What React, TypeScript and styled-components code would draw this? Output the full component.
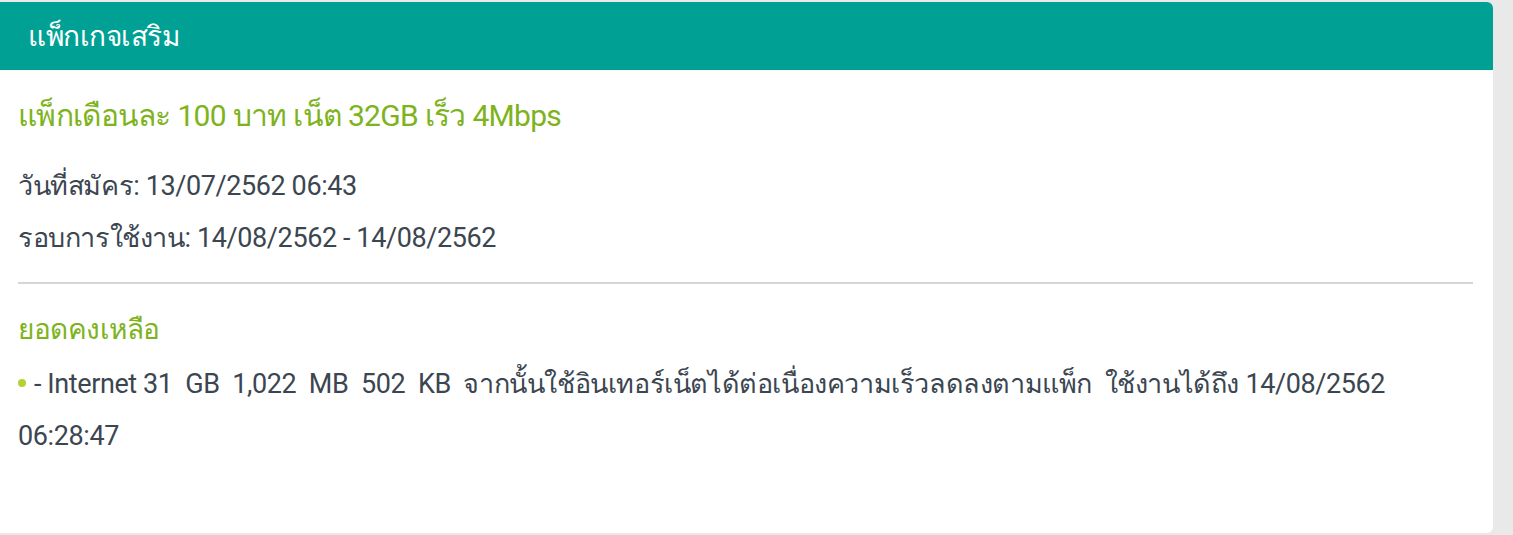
import { createGlobalStyle, styled } from "styled-components";

const GlobalStyle = createGlobalStyle`
  html, body {
    margin: 0;
    padding: 0;
    background: #e9e9e9;
  }
  body {
    font-family: Roboto, "Noto Sans", "DejaVu Sans", sans-serif;
  }
`;

const Page = styled.div`
  width: 1513px;
  height: 535px;
  padding-top: 2px;
  box-sizing: border-box;
`;

const Card = styled.section`
  width: 1493px;
  height: 531px;
  background: #ffffff;
  border-radius: 0 6px 6px 0;
  overflow: hidden;
  display: flex;
  flex-direction: column;
`;

const CardHeader = styled.header`
  height: 68px;
  padding-left: 28px;
  display: flex;
  align-items: center;
  background: #00a194;
  color: #ffffff;
  font-size: 28px;
  letter-spacing: -0.5px;
`;

const Body = styled.div`
  padding: 0 20px 0 18px;
`;

const Section = styled.div<{ $divided?: boolean }>`
  padding-bottom: ${({ $divided }) => ($divided ? "18px" : "0")};
  border-bottom: ${({ $divided }) => ($divided ? "2px solid #d6d6d6" : "none")};
`;

const Title = styled.h2`
  margin: 0;
  padding-top: 26px;
  color: #7db31b;
  font-size: 30px;
  font-weight: 400;
  line-height: 40px;
  letter-spacing: -0.7px;
`;

const Line = styled.p`
  margin: 0;
  color: #3b4651;
  font-size: 27px;
  line-height: 52px;
  letter-spacing: -0.4px;
`;

const InfoList = styled.div`
  padding-top: 24px;
`;

const SubTitle = styled(Title)`
  padding-top: 26px;
  padding-bottom: 8px;
  font-size: 28px;
  letter-spacing: -0.5px;
`;

const Bullet = styled.span`
  display: inline-block;
  width: 8px;
  height: 8px;
  margin-right: 8px;
  border-radius: 50%;
  background: #b3d235;
  vertical-align: middle;
  position: relative;
  top: -3px;
`;

const Balance = styled.span`
  white-space: pre-wrap;
`;

export default function App() {
  return (
    <>
      <GlobalStyle />
      <Page>
        <Card>
          <CardHeader>แพ็กเกจเสริม</CardHeader>
          <Body>
            <Section $divided>
              <Title>แพ็กเดือนละ 100 บาท เน็ต 32GB เร็ว 4Mbps</Title>
              <InfoList>
                <Line>วันที่สมัคร: 13/07/2562 06:43</Line>
                <Line>รอบการใช้งาน: 14/08/2562 - 14/08/2562</Line>
              </InfoList>
            </Section>
            <Section>
              <SubTitle>ยอดคงเหลือ</SubTitle>
              <Line>
                <Bullet />
                <Balance>
                  {"- Internet 31  GB  1,022  MB  502  KB  จากนั้นใช้อินเทอร์เน็ตได้ต่อเนื่องความเร็วลดลงตามแพ็ก  ใช้งานได้ถึง 14/08/2562 06:28:47"}
                </Balance>
              </Line>
            </Section>
          </Body>
        </Card>
      </Page>
    </>
  );
}
